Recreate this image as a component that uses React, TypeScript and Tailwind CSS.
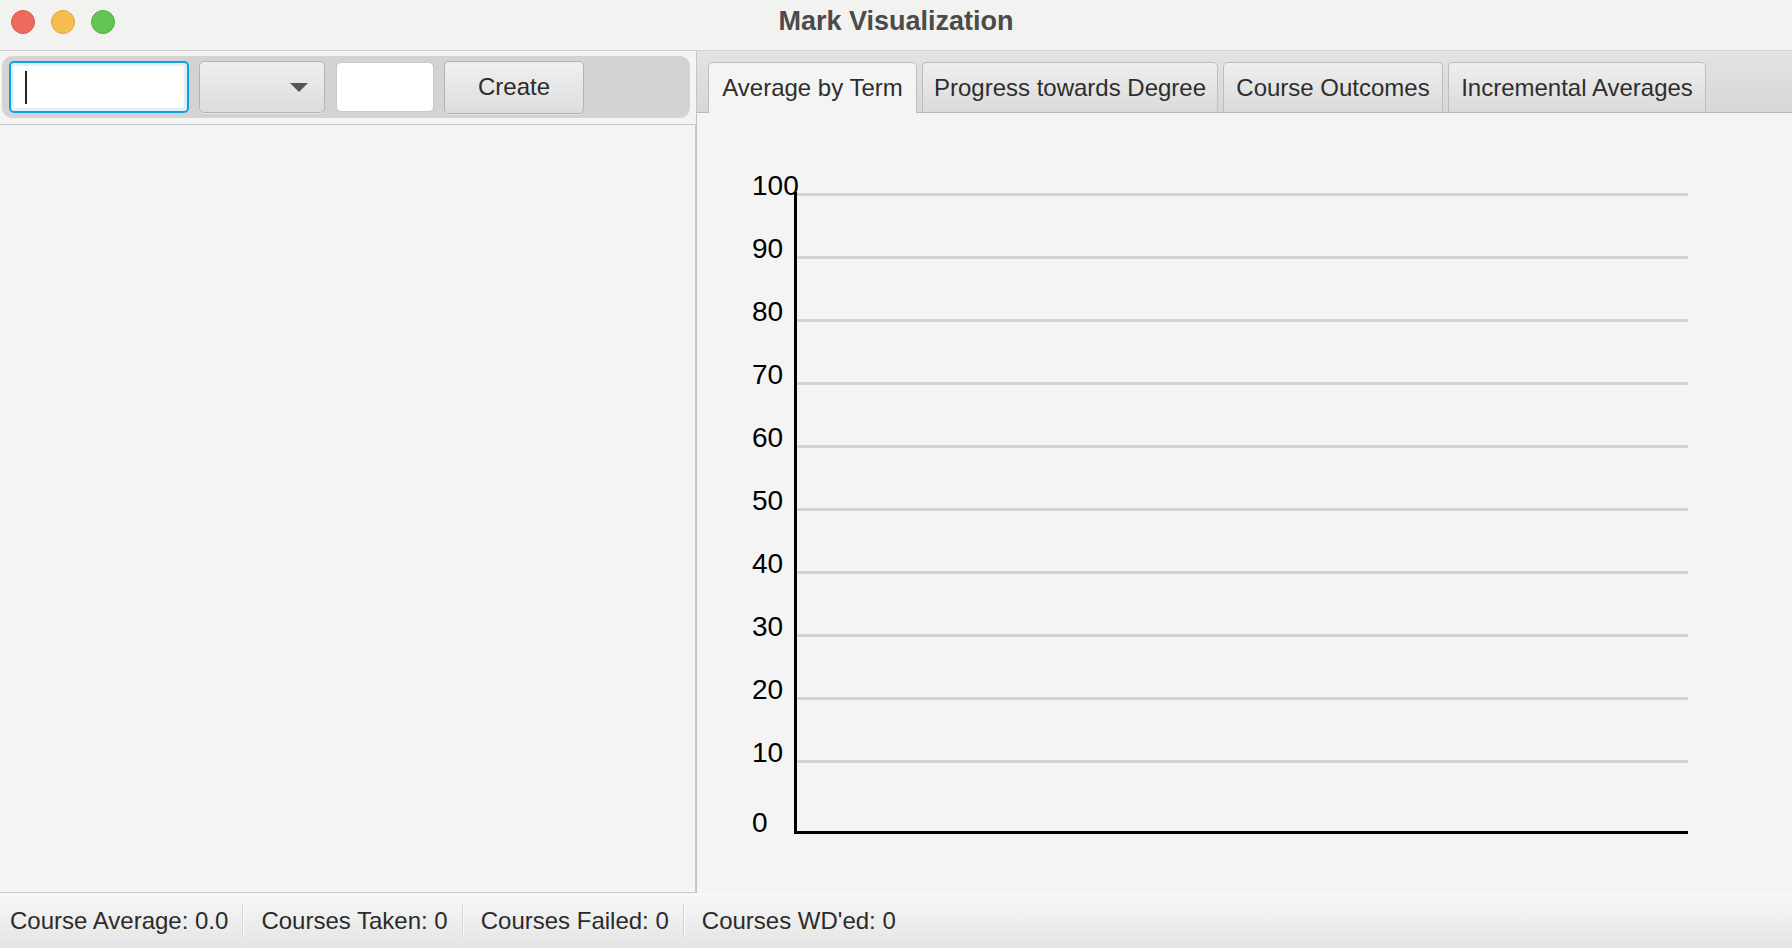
import React from "react";

/* ================= DATA ================= */
const TABS = [
  { label: "Average by Term", w: "w-[209px]" },
  { label: "Progress towards Degree", w: "w-[296px]" },
  { label: "Course Outcomes", w: "w-[220px]" },
  { label: "Incremental Averages", w: "w-[258px]" },
];

const STATS = [
  "Course Average: 0.0",
  "Courses Taken: 0",
  "Courses Failed: 0",
  "Courses WD'ed: 0",
];

const TICKS = [100, 90, 80, 70, 60, 50, 40, 30, 20, 10];

/* chart geometry, relative to the chart pane (697, 113) */
const AXIS_X = 98.5;
const TOP_Y = 81.5;
const STEP = 63;
const BASE_Y = 719.5;
const END_X = 991;

function TitleBar() {
  return (
    <div className="relative h-[51px] shrink-0 border-b border-[#d1d1d1] bg-[#f2f2f1]">
      <div className="flex items-center gap-[16px] pl-[11px] pt-[10px]">
        <span className="block w-[24px] h-[24px] rounded-full bg-[#ee6a5f] border border-[#d9574d]" />
        <span className="block w-[24px] h-[24px] rounded-full bg-[#f5be4f] border border-[#dea83d]" />
        <span className="block w-[24px] h-[24px] rounded-full bg-[#62c554] border border-[#50ae43]" />
      </div>
      <div className="absolute inset-x-0 top-0 h-[43px] flex items-center justify-center text-[27px] font-bold text-[#4b4b4b]">
        Mark Visualization
      </div>
    </div>
  );
}

function Toolbar() {
  return (
    <div className="pt-[5px] pl-[2px]">
      <div className="w-[688px] h-[62px] rounded-[10px] bg-[#d3d3d3] flex items-center pl-[7px]">
        {/* focused text field */}
        <div className="w-[180px] h-[52px] rounded-[5px] border-2 border-[#12a0dc] bg-white shadow-[inset_0_0_0_3px_#def0f9] flex items-center pl-[14px]">
          <span className="block w-[2px] h-[33px] bg-[#222]" />
        </div>
        {/* combo box */}
        <div className="ml-[10px] w-[126px] h-[52px] rounded-[5px] border border-[#b4b4b4] bg-gradient-to-b from-[#efefef] to-[#dcdcdc] flex items-center justify-end pr-[16px] shadow-[0_1px_0_#e6e6e6]">
          <svg width="18" height="9" viewBox="0 0 18 9">
            <path d="M0 0 L18 0 L9 9 Z" fill="#555" />
          </svg>
        </div>
        {/* small field */}
        <div className="ml-[11px] w-[98px] h-[50px] rounded-[5px] bg-white border border-[#c9c9c9]" />
        {/* button */}
        <button className="ml-[10px] w-[140px] h-[53px] rounded-[5px] border border-[#b3b3b3] bg-gradient-to-b from-[#f0f0f0] to-[#dddddd] text-[24px] text-[#2b2b2b] shadow-[0_1px_0_#e6e6e6]">
          Create
        </button>
      </div>
    </div>
  );
}

function TabHeader() {
  return (
    <div className="h-[62px] shrink-0 border-b border-[#b9b9b9] bg-gradient-to-b from-[#e3e3e3] to-[#d7d7d7] flex items-end gap-[5px] pl-[11px]">
      {TABS.map((t, i) =>
        i === 0 ? (
          <div
            key={t.label}
            className={`${t.w} h-[51px] -mb-px rounded-t-[5px] border border-b-0 border-[#bdbdbd] bg-[#f4f4f4] flex items-center justify-center text-[24px] text-[#2e2e2e]`}
          >
            {t.label}
          </div>
        ) : (
          <div
            key={t.label}
            className={`${t.w} h-[50px] rounded-t-[5px] border border-b-0 border-[#bdbdbd] bg-gradient-to-b from-[#efefef] to-[#dadada] flex items-center justify-center text-[24px] text-[#2e2e2e]`}
          >
            {t.label}
          </div>
        )
      )}
    </div>
  );
}

function Chart() {
  return (
    <svg width="1095" height="780" className="block">
      {TICKS.map((v, i) => {
        const y = TOP_Y + STEP * i;
        return (
          <g key={v}>
            <line x1={AXIS_X} x2={END_X} y1={y} y2={y} stroke="#d3d3d3" strokeWidth={3} />
            <text
              x={55}
              y={y}
              fontSize={28}
              fontFamily="'Liberation Sans', Arial, sans-serif"
              fill="#000"
            >
              {v}
            </text>
          </g>
        );
      })}
      <text x={55} y={718.7} fontSize={28} fontFamily="'Liberation Sans', Arial, sans-serif" fill="#000">
        0
      </text>
      {/* axes */}
      <line x1={AXIS_X} x2={AXIS_X} y1={79} y2={721} stroke="#000" strokeWidth={3} />
      <line x1={97} x2={END_X} y1={BASE_Y} y2={BASE_Y} stroke="#000" strokeWidth={3} />
    </svg>
  );
}

function StatusBar() {
  return (
    <div className="h-[55px] shrink-0 bg-gradient-to-b from-[#f8f8f8] to-[#e4e4e4] flex items-center pl-[10px] text-[24px] text-[#2b2b2b]">
      {STATS.map((s, i) => (
        <React.Fragment key={s}>
          {i > 0 && (
            <span className="block w-[2px] h-[33px] ml-[14px] mr-[17px] bg-[#d2d2d2] border-r border-[#fafafa]" />
          )}
          <span>{s}</span>
        </React.Fragment>
      ))}
    </div>
  );
}

export default function App() {
  return (
    <div
      className="w-[1792px] h-[948px] flex flex-col bg-[#f4f4f4] overflow-hidden"
      style={{ fontFamily: "'Liberation Sans', Arial, sans-serif" }}
    >
      <TitleBar />

      <div className="flex flex-1 min-h-0">
        {/* LEFT */}
        <div className="w-[696px] shrink-0 flex flex-col">
          <Toolbar />
          <div className="mt-[6px] flex-1 border-t border-r border-b border-[#c9c9c9] bg-[#f4f4f4]" />
        </div>

        {/* RIGHT */}
        <div className="flex-1 flex flex-col border-l border-[#c4c4c4]">
          <TabHeader />
          <div className="flex-1 bg-[#f4f4f4]">
            <Chart />
          </div>
        </div>
      </div>

      <StatusBar />
    </div>
  );
}
